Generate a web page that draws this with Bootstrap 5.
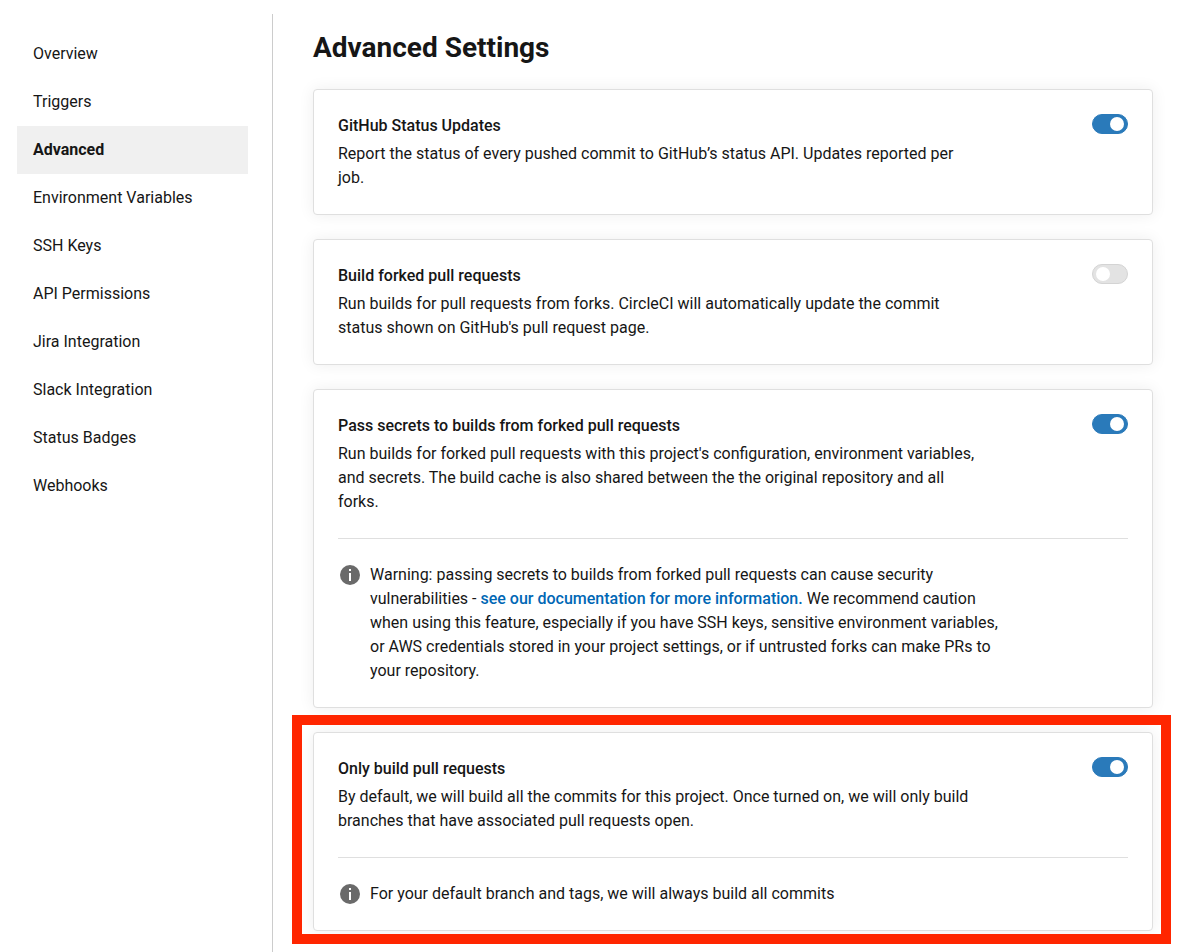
<!DOCTYPE html>
<html lang="en">
<head>
<meta charset="utf-8">
<meta name="viewport" content="width=device-width, initial-scale=1">
<title>Advanced Settings</title>
<link href="https://cdn.jsdelivr.net/npm/bootstrap@5.3.0/dist/css/bootstrap.min.css" rel="stylesheet">
<style>
  body { font-family: Roboto, "Liberation Sans", sans-serif; font-size: 16px; line-height: 24px; color: #161616; background: #fff; }
  .page { min-height: 100vh; padding-top: 14px; }
  .sidebar { flex: 0 0 273px; padding: 16px 24px 0 17px; border-right: 1px solid #ccc; }
  .sidebar .nav-link { padding: 12px 16px; color: #161616; border-radius: 0; }
  .sidebar .nav-pills .nav-link.active { background: #f0f0f0; color: #161616; font-weight: 700; }
  .content { min-width: 0; padding: 16px 40px 0; }
  .page-title { font-size: 28px; line-height: 35px; font-weight: 700; margin-bottom: 24px; }
  .setting { border: 1px solid #dfdfdf; border-radius: 4px; padding: 24px; box-shadow: 0 0 16px rgba(0, 0, 0, .07); }
  .setting-title { font-size: 16px; line-height: 24px; font-weight: 500; margin-bottom: 4px; }
  .setting-text { max-width: 640px; }
  .setting-note { border-top: 1px solid #dfdfdf; margin-top: 24px; padding: 24px 0 0 2px; gap: 10px; }
  .setting-note p { max-width: 632px; }
  .setting-note svg { margin-top: 2px; }
  .setting-note a { color: #0067b5; font-weight: 500; text-decoration: none; }
  .form-switch.toggle { padding: 0; min-height: 0; }
  .toggle .form-check-input {
    float: none; display: block; width: 36px; height: 20px; margin: 0;
    border: 1px solid #d4d4d4; border-radius: 10px; background: #e3e3e3; position: relative;
  }
  .toggle .form-check-input::before {
    content: ""; position: absolute; top: 2px; left: 3px; width: 14px; height: 14px;
    border-radius: 50%; background: #fff;
  }
  .toggle .form-check-input:checked { background: #2a7aba; border-color: #2a7aba; }
  .toggle .form-check-input:checked::before { left: 17px; }
  .highlight-frame { position: absolute; inset: -18px -19px -14px -22px; border: 10px solid #ff2600; pointer-events: none; }
</style>
</head>
<body>
<div class="page d-flex">
  <nav class="sidebar" aria-label="Project settings">
    <div class="nav nav-pills flex-column">
      <a class="nav-link" href="#">Overview</a>
      <a class="nav-link" href="#">Triggers</a>
      <a class="nav-link active" aria-current="page" href="#">Advanced</a>
      <a class="nav-link" href="#">Environment Variables</a>
      <a class="nav-link" href="#">SSH Keys</a>
      <a class="nav-link" href="#">API Permissions</a>
      <a class="nav-link" href="#">Jira Integration</a>
      <a class="nav-link" href="#">Slack Integration</a>
      <a class="nav-link" href="#">Status Badges</a>
      <a class="nav-link" href="#">Webhooks</a>
    </div>
  </nav>
  <main class="content flex-grow-1">
    <h1 class="page-title">Advanced Settings</h1>
    <div class="d-flex flex-column gap-4">
      <section class="card setting">
        <div class="d-flex justify-content-between align-items-start">
          <div>
            <label class="setting-title d-block" for="status">GitHub Status Updates</label>
            <p class="setting-text mb-0">Report the status of every pushed commit to GitHub’s status API. Updates reported per job.</p>
          </div>
          <div class="form-check form-switch toggle"><input class="form-check-input" type="checkbox" role="switch" id="status" checked></div>
        </div>
      </section>

      <section class="card setting">
        <div class="d-flex justify-content-between align-items-start">
          <div>
            <label class="setting-title d-block" for="forks">Build forked pull requests</label>
            <p class="setting-text mb-0">Run builds for pull requests from forks. CircleCI will automatically update the commit status shown on GitHub's pull request page.</p>
          </div>
          <div class="form-check form-switch toggle"><input class="form-check-input" type="checkbox" role="switch" id="forks"></div>
        </div>
      </section>

      <section class="card setting">
        <div class="d-flex justify-content-between align-items-start">
          <div>
            <label class="setting-title d-block" for="secrets">Pass secrets to builds from forked pull requests</label>
            <p class="setting-text mb-0">Run builds for forked pull requests with this project's configuration, environment variables, and secrets. The build cache is also shared between the the original repository and all forks.</p>
          </div>
          <div class="form-check form-switch toggle"><input class="form-check-input" type="checkbox" role="switch" id="secrets" checked></div>
        </div>
        <div class="setting-note d-flex align-items-start">
          <svg class="flex-shrink-0" width="20" height="20" viewBox="0 0 20 20" aria-hidden="true"><circle cx="10" cy="10" r="10" fill="#6a6a6a"/><path fill="#fff" d="M9 4h2v2H9zM9 8h2v8H9z"/></svg>
          <p class="mb-0">Warning: passing secrets to builds from forked pull requests can cause security vulnerabilities - <a href="#">see our documentation for more information.</a> We recommend caution when using this feature, especially if you have SSH keys, sensitive environment variables, or AWS credentials stored in your project settings, or if untrusted forks can make PRs to your repository.</p>
        </div>
      </section>

      <section class="card setting position-relative">
        <div class="d-flex justify-content-between align-items-start">
          <div>
            <label class="setting-title d-block" for="only-prs">Only build pull requests</label>
            <p class="setting-text mb-0">By default, we will build all the commits for this project. Once turned on, we will only build branches that have associated pull requests open.</p>
          </div>
          <div class="form-check form-switch toggle"><input class="form-check-input" type="checkbox" role="switch" id="only-prs" checked></div>
        </div>
        <div class="setting-note d-flex align-items-start">
          <svg class="flex-shrink-0" width="20" height="20" viewBox="0 0 20 20" aria-hidden="true"><circle cx="10" cy="10" r="10" fill="#6a6a6a"/><path fill="#fff" d="M9 4h2v2H9zM9 8h2v8H9z"/></svg>
          <p class="mb-0">For your default branch and tags, we will always build all commits</p>
        </div>
        <div class="highlight-frame"></div>
      </section>
    </div>
  </main>
</div>
<script src="https://cdn.jsdelivr.net/npm/bootstrap@5.3.0/dist/js/bootstrap.bundle.min.js"></script>
</body>
</html>
